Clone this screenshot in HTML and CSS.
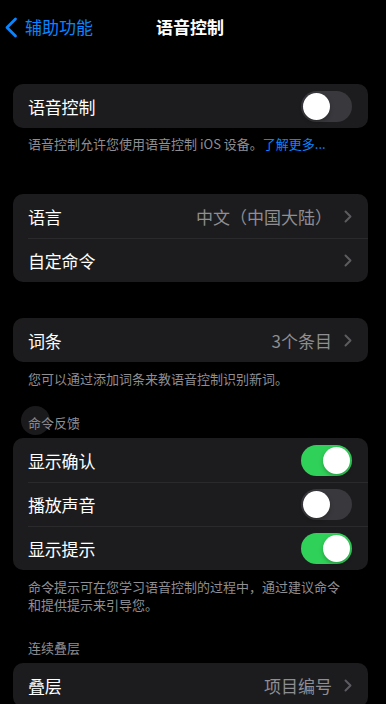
FILE: index.html
```html
<!DOCTYPE html>
<html lang="zh-CN">
<head>
<meta charset="utf-8">
<link rel="stylesheet" href="styles.css">
</head>
<body>
<div class="screen">
  <header class="nav">
    <div class="nav-back">
      <svg class="back-chevron" width="14" height="21" viewBox="0 0 14 21"><path d="M11.5 2 L3 10.5 L11.5 19" fill="none" stroke="#0a84ff" stroke-width="2.8" stroke-linecap="round" stroke-linejoin="round"/></svg>
      <span>辅助功能</span>
    </div>
    <div class="nav-title">语音控制</div>
    <div></div>
  </header>

  <section class="group g1">
    <div class="row"><div class="inner"><span class="label">语音控制</span><span class="toggle"><span class="knob"></span></span></div></div>
  </section>
  <p class="foot f1">语音控制允许您使用语音控制 iOS 设备。<span class="link">了解更多...</span></p>

  <section class="group g2">
    <div class="row"><div class="inner"><span class="label">语言</span><span class="value">中文（中国大陆）</span><svg class="chev" width="8" height="13" viewBox="0 0 8 13"><path d="M1.5 1.5 L6.5 6.5 L1.5 11.5" fill="none" stroke="#5b5b60" stroke-width="2" stroke-linecap="round" stroke-linejoin="round"/></svg></div></div>
    <div class="row"><div class="inner"><span class="label">自定命令</span><svg class="chev" width="8" height="13" viewBox="0 0 8 13"><path d="M1.5 1.5 L6.5 6.5 L1.5 11.5" fill="none" stroke="#5b5b60" stroke-width="2" stroke-linecap="round" stroke-linejoin="round"/></svg></div></div>
  </section>

  <section class="group g3">
    <div class="row"><div class="inner"><span class="label">词条</span><span class="value">3个条目</span><svg class="chev" width="8" height="13" viewBox="0 0 8 13"><path d="M1.5 1.5 L6.5 6.5 L1.5 11.5" fill="none" stroke="#5b5b60" stroke-width="2" stroke-linecap="round" stroke-linejoin="round"/></svg></div></div>
  </section>
  <p class="foot f3">您可以通过添加词条来教语音控制识别新词。</p>

  <h2 class="head h4">命令反馈</h2>
  <section class="group g4">
    <div class="row"><div class="inner"><span class="label">显示确认</span><span class="toggle on"><span class="knob"></span></span></div></div>
    <div class="row"><div class="inner"><span class="label">播放声音</span><span class="toggle"><span class="knob"></span></span></div></div>
    <div class="row"><div class="inner"><span class="label">显示提示</span><span class="toggle on"><span class="knob"></span></span></div></div>
  </section>
  <p class="foot f4">命令提示可在您学习语音控制的过程中，通过建议命令和提供提示来引导您。</p>

  <h2 class="head h5">连续叠层</h2>
  <section class="group g5">
    <div class="row"><div class="inner"><span class="label">叠层</span><span class="value">项目编号</span><svg class="chev" width="8" height="13" viewBox="0 0 8 13"><path d="M1.5 1.5 L6.5 6.5 L1.5 11.5" fill="none" stroke="#5b5b60" stroke-width="2" stroke-linecap="round" stroke-linejoin="round"/></svg></div></div>
  </section>

  <div class="touch-dot"></div>
</div>
</body>
</html>
```

FILE: styles.css
```css
* { box-sizing: border-box; }
html, body {
  margin: 0;
  padding: 0;
  background: #000;
}
body {
  font-family: "Noto Sans CJK SC", "Noto Sans", "Liberation Sans", sans-serif;
  color: #fff;
  width: 386px;
  height: 704px;
  overflow: hidden;
}
.screen {
  position: relative;
  width: 386px;
  height: 704px;
  overflow: hidden;
}
.nav {
  height: 54px;
  display: grid;
  grid-template-columns: 1fr auto 1fr;
  align-items: center;
  padding-right: 6px;
}
.nav-back {
  display: flex;
  align-items: center;
  gap: 7px;
  padding-left: 4px;
  color: #0a84ff;
  font-size: 17px;
  line-height: 22px;
}
.back-chevron { display: block; }
.nav-title {
  font-size: 17px;
  font-weight: 700;
  line-height: 22px;
  color: #fff;
}
.group {
  margin: 0 18px 0 13px;
  background: #1c1c1e;
  border-radius: 10px;
  overflow: hidden;
}
.row {
  padding-left: 15px;
}
.inner {
  height: 44px;
  display: flex;
  align-items: center;
  padding-right: 16px;
}
.row + .row .inner {
  border-top: 1px solid #2a2a2d;
}
.label {
  font-size: 17px;
  flex: 1;
  color: #fff;
  letter-spacing: -0.2px;
}
.value {
  font-size: 17px;
  color: #8e8e93;
  margin-right: 12px;
}
.chev { display: block; flex: none; }
.toggle {
  width: 51px;
  height: 31px;
  border-radius: 16px;
  background: #39393d;
  position: relative;
  flex: none;
}
.toggle.on { background: #30d158; }
.knob {
  position: absolute;
  top: 2px;
  left: 2px;
  width: 27px;
  height: 27px;
  border-radius: 50%;
  background: #fff;
  box-shadow: 0 2px 4px rgba(0,0,0,0.25);
}
.toggle.on .knob { left: 22px; }
.foot {
  margin: 0;
  padding: 0 36px 0 28px;
  font-size: 13px;
  line-height: 18px;
  color: #8e8e93;
}
.link { color: #0a84ff; }
.head {
  margin: 0;
  padding: 0 28px;
  font-size: 13px;
  line-height: 18px;
  font-weight: 400;
  color: #8e8e93;
}
.g1 { margin-top: 30px; }
.f1 { margin-top: 7px; }
.g2 { margin-top: 41px; }
.g3 { margin-top: 36px; }
.f3 { margin-top: 8px; }
.h4 { margin-top: 26px; }
.g4 { margin-top: 6px; }
.f4 { margin-top: 8px; }
.h5 { margin-top: 25px; }
.g5 { margin-top: 6px; }
.touch-dot {
  position: absolute;
  left: 21px;
  top: 406px;
  width: 29px;
  height: 29px;
  border-radius: 50%;
  background: rgba(120,120,128,0.22);
}
```
